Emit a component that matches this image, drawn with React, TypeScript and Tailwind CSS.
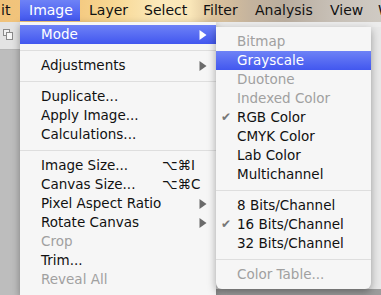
import React from "react";

type Item =
  | { kind: "sep" }
  | {
      kind?: "item";
      label: string;
      disabled?: boolean;
      active?: boolean;
      sub?: boolean;
      keys?: string;
      checked?: boolean;
    };

const mainItems: Item[] = [
  { label: "Mode", active: true, sub: true },
  { kind: "sep" },
  { label: "Adjustments", sub: true },
  { kind: "sep" },
  { label: "Duplicate..." },
  { label: "Apply Image..." },
  { label: "Calculations..." },
  { kind: "sep" },
  { label: "Image Size...", keys: "⌥⌘I" },
  { label: "Canvas Size...", keys: "⌥⌘C" },
  { label: "Pixel Aspect Ratio", sub: true },
  { label: "Rotate Canvas", sub: true },
  { label: "Crop", disabled: true },
  { label: "Trim..." },
  { label: "Reveal All", disabled: true },
];

const modeItems: Item[] = [
  { label: "Bitmap", disabled: true },
  { label: "Grayscale", active: true },
  { label: "Duotone", disabled: true },
  { label: "Indexed Color", disabled: true },
  { label: "RGB Color", checked: true },
  { label: "CMYK Color" },
  { label: "Lab Color" },
  { label: "Multichannel" },
  { kind: "sep" },
  { label: "8 Bits/Channel" },
  { label: "16 Bits/Channel", checked: true },
  { label: "32 Bits/Channel" },
  { kind: "sep" },
  { label: "Color Table...", disabled: true },
];

const menuBar = [
  { label: "it", w: "w-[20px]", pl: "pl-[1px]" },
  { label: "Image", w: "w-[60px]", pl: "pl-[9px]", active: true },
  { label: "Layer", w: "w-[55px]", pl: "pl-[9px]" },
  { label: "Select", w: "w-[59px]", pl: "pl-[9px]" },
  { label: "Filter", w: "w-[52px]", pl: "pl-[9px]" },
  { label: "Analysis", w: "w-[75px]", pl: "pl-[9px]" },
  { label: "View", w: "w-[48px]", pl: "pl-[9px]" },
  { label: "W", w: "w-[20px]", pl: "pl-[9px]" },
];

const blue = "bg-[linear-gradient(#6e82f6,#4257ef)] text-white";

function Arrow({ white }: { white?: boolean }) {
  return (
    <svg width="8" height="10" viewBox="0 0 8 10" className="absolute right-[9px] top-[5px]">
      <path d="M0.5 0 L7.5 5 L0.5 10 Z" fill={white ? "#ffffff" : "#6b6b6b"} />
    </svg>
  );
}

function Row({ item }: { item: Item }) {
  if (item.kind === "sep") {
    return (
      <div className="h-[12px] flex items-center">
        <div className="h-px w-full bg-[#dedede]" />
      </div>
    );
  }
  const color = item.active ? blue : item.disabled ? "text-[#a0a0a0]" : "text-[#111111]";
  return (
    <div className={`relative h-[19px] leading-[19px] pl-[21px] whitespace-nowrap ${color}`}>
      {item.checked && (
        <span className="absolute left-[5px] top-0 text-[12px] text-[#777777]">✔</span>
      )}
      {item.label}
      {item.keys && <span className="absolute left-[142px] top-0">{item.keys}</span>}
      {item.sub && <Arrow white={item.active} />}
    </div>
  );
}

export default function App() {
  return (
    <div
      className="w-[381px] h-[295px] overflow-hidden flex flex-col text-[13.5px] bg-[#c0c0c0]"
      style={{ fontFamily: '"DejaVu Sans", "Liberation Sans", sans-serif' }}
    >
      <div className="h-[22px] flex shrink-0 bg-[linear-gradient(90deg,#f0c27a_0%,#f4c980_20%,#f8d894_30%,#fbe9bb_42%,#f9e6b8_50%,#dcc39c_56%,#c4b39e_66%,#b9ad9f_75%,#c8c1b8_88%,#cfcac3_100%)]">
        {menuBar.map((m) => (
          <div
            key={m.label}
            className={`${m.w} ${m.pl} shrink-0 h-[21px] leading-[21px] text-[14px] whitespace-nowrap ${
              m.active ? blue : "text-[#111111]"
            }`}
          >
            {m.label}
          </div>
        ))}
      </div>

      <div className="flex flex-1 min-h-0">
        <div className="w-[20px] shrink-0 flex flex-col">
          <div className="h-[28px] bg-[#e3e3e3] border-b border-[#b5b5b5] relative">
            <div className="absolute left-[3px] top-[7px] w-[7px] h-[7px] border border-[#8a8a8a] bg-[#f2f2f2]" />
            <div className="absolute left-[6px] top-[10px] w-[7px] h-[8px] border border-[#8a8a8a] bg-[#f7f7f7]" />
          </div>
          <div className="flex-1 bg-[#bdbdbd]" />
        </div>

        <div className="w-[196px] shrink-0 bg-[#f6f6f6] pt-[3px] shadow-[0_3px_8px_rgba(0,0,0,0.35)] z-10">
          {mainItems.map((it, i) => (
            <Row key={i} item={it} />
          ))}
        </div>

        <div className="flex-1 flex flex-col bg-[#9c9c9c]">
          <div className="h-[5px] bg-[#ececec] shrink-0" />
          <div className="flex bg-[#e8e8e8]">
            <div className="w-[155px] shrink-0 bg-[#f6f6f6] pt-[5px] pb-[5px] rounded-b-[6px] shadow-[0_3px_8px_rgba(0,0,0,0.35)] z-20">
              {modeItems.map((it, i) => (
                <Row key={i} item={it} />
              ))}
            </div>
            <div className="flex-1" />
          </div>
          <div className="flex-1" />
        </div>
      </div>
    </div>
  );
}
